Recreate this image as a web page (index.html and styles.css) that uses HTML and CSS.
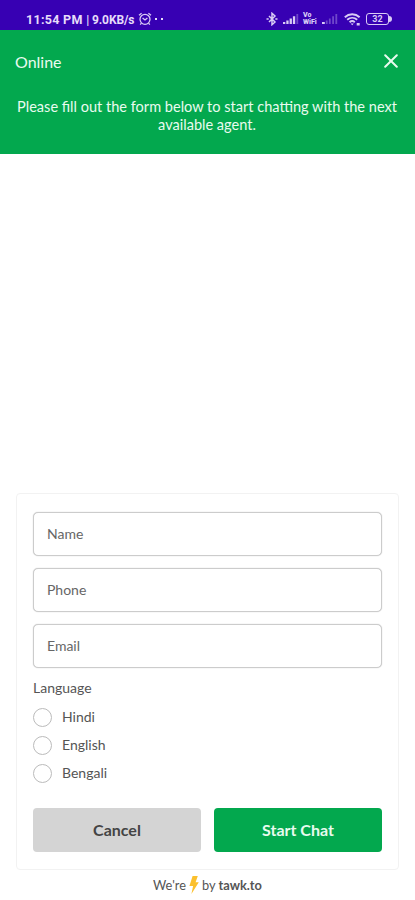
FILE: index.html
```html
<!DOCTYPE html>
<html lang="en">
<head>
  <meta charset="utf-8">
  <meta name="viewport" content="width=device-width, initial-scale=1">
  <title>Chat</title>
  <link rel="stylesheet" href="styles.css">
</head>
<body>
  <div class="status-bar">
    <div class="status-time">11:54 PM <span>| 9.0KB/s</span></div>
    <svg class="alarm" width="14" height="14" viewBox="0 0 14 14" fill="none" stroke="currentColor" stroke-width="1.3">
      <circle cx="7" cy="7.3" r="5"/>
      <path d="M4.6 6l2.4 2 2.4-2M1 3.3l2.6-2M13 3.3l-2.6-2M3.4 11.2l-1.2 1.5M10.6 11.2l1.2 1.5"/>
    </svg>
    <span class="dots"><i></i><i></i></span>

    <div class="status-icons">
      <svg width="12" height="14" viewBox="0 0 12 14" fill="none" stroke="currentColor" stroke-width="1.5">
        <path d="M3 4l6 6-3 2.7V1.3L9 4l-6 6"/>
        <path d="M.5 7h2.2M9.3 7h2.2"/>
      </svg>
      <svg class="signal" width="16" height="12" viewBox="0 0 16 12" fill="currentColor">
        <path d="M0 9h2.3v2H0zM3.3 7.5h2.3V11H3.3zM6.6 5.5h2.3V11H6.6zM9.9 3.2h2.3V11H9.9z"/>
        <path opacity=".35" d="M13.4 1h1.8v10h-1.8z"/>
      </svg>
      <span class="vowifi">Vo WiFi</span>
      <svg class="signal-two" width="16" height="12" viewBox="0 0 16 12" fill="currentColor">
        <path d="M0 9h2.8v2H0z"/>
        <path opacity=".35" d="M3.8 7.5h1.8V11H3.8zM6.9 5.5h1.8V11H6.9zM10.2 3.2H12V11h-1.8zM13.4 1h1.8v10h-1.8z"/>
      </svg>
      <svg class="wifi" width="17" height="13" viewBox="0 0 17 13" fill="none" stroke="currentColor" stroke-width="1.9">
        <path d="M.8 4.2c4.3-3.9 10.5-3.9 14.8 0M3.2 6.8c2.9-2.6 7.1-2.6 10 0M5.6 9.2c1.5-1.3 3.7-1.3 5.2 0"/>
        <path fill="currentColor" stroke="none" d="M6.6 10.4h3.2L8.2 12.2zM12.7 10h3v2.4h-3z"/>
      </svg>
      <div class="battery">32</div>
    </div>
  </div>

  <div class="header">
    <div class="header-top">
      <span>Online</span>
      <svg width="14" height="14" viewBox="0 0 14 14" fill="none" stroke="currentColor" stroke-width="2" stroke-linecap="round">
        <path d="M1.2 1.2l11.6 11.6M12.8 1.2L1.2 12.8"/>
      </svg>
    </div>
    <p>Please fill out the form below to start chatting with the next available agent.</p>
  </div>

  <form class="chat-form">
    <input type="text" name="name" placeholder="Name">
    <input type="text" name="phone" placeholder="Phone">
    <input type="text" name="email" placeholder="Email">

    <div class="group-label">Language</div>
    <label><input type="radio" name="language"><span>Hindi</span></label>
    <label><input type="radio" name="language"><span>English</span></label>
    <label><input type="radio" name="language"><span>Bengali</span></label>

    <div class="buttons">
      <button type="button" class="cancel">Cancel</button>
      <button type="submit" class="start">Start Chat</button>
    </div>
  </form>

  <div class="footer">
    <span>We're</span>
    <svg width="10" height="18" viewBox="0 0 10 18" fill="#fbc02d">
      <path d="M3.6 0h5.2L6.6 6.2h3.2L2.4 18l1.7-8H.4z"/>
    </svg>
    <span>by <b>tawk.to</b></span>
  </div>
</body>
</html>
```
FILE: styles.css
```css
* {
  box-sizing: border-box;
}

body {
  margin: 0;
  height: 900px;
  display: flex;
  flex-direction: column;
  overflow: hidden;
  background-color: #fff;
  color: #555;
  font-family: Lato, sans-serif;
  font-size: 14px;
}

.status-bar {
  display: flex;
  align-items: center;
  height: 30px;
  padding: 8px 23px 0 26px;
  background-color: #3700b3;
  color: #d9cbf5;
  font-family: Roboto, sans-serif;
}

.status-time {
  width: 111px;
  font-size: 12.5px;
  font-weight: bold;
  letter-spacing: 0.3px;
  white-space: nowrap;
  color: #e6dcfa;
}

.status-time span {
  font-size: 12px;
  letter-spacing: -0.1px;
}

.alarm {
  margin-left: 1px;
}

.dots {
  display: flex;
  gap: 4px;
  margin-left: 3px;
}

.dots i {
  width: 2px;
  height: 2px;
  background-color: #e6dcfa;
}

.status-icons {
  display: flex;
  align-items: center;
  margin-left: auto;
}

.signal {
  margin-left: 5px;
}

.vowifi {
  width: 17px;
  margin-left: 4px;
  font-size: 7px;
  font-weight: 900;
  line-height: 7px;
}

.signal-two {
  margin-left: 2px;
}

.wifi {
  margin-left: 6px;
}

.battery {
  position: relative;
  width: 23px;
  height: 12px;
  margin: 0 3px 0 5px;
  border: 1.5px solid #d9cbf5;
  border-radius: 3px;
  font-size: 9px;
  font-weight: bold;
  line-height: 10px;
  text-align: center;
}

.battery::after {
  content: "";
  position: absolute;
  top: 2px;
  right: -4px;
  width: 3px;
  height: 6px;
  border-radius: 0 3px 3px 0;
  background-color: #d9cbf5;
}

.header {
  height: 124px;
  padding: 21px 16px 0 15px;
  background-color: #03a84e;
  color: #e9fbef;
}

.header-top {
  display: flex;
  align-items: center;
  justify-content: space-between;
  height: 20px;
  font-size: 16px;
}

.header-top svg {
  margin-right: 1px;
}

.header p {
  margin: 27px -4px 0;
  font-size: 14.55px;
  line-height: 18px;
  text-align: center;
}

.chat-form {
  height: 377px;
  margin: auto 16px 0;
  padding: 18px 16px 0;
  border: 1px solid #f2f2f2;
  border-radius: 4px;
}

input[type="text"] {
  display: block;
  width: 100%;
  height: 44px;
  margin: 0 0 12px;
  padding: 0 13px 2px;
  border: 1px solid #ccc;
  border-radius: 5px;
  box-shadow: 0 0 1px #bbb;
  font-family: inherit;
  font-size: 14px;
}

input::placeholder {
  color: #666;
  opacity: 1;
}

.group-label {
  height: 23px;
  line-height: 16px;
}

label {
  display: flex;
  align-items: center;
  height: 28px;
}

label span {
  padding-bottom: 2px;
}

input[type="radio"] {
  appearance: none;
  width: 19px;
  height: 19px;
  margin: 0 10px 0 0;
  border: 1px solid #bbb;
  border-radius: 50%;
}

.buttons {
  display: flex;
  gap: 13px;
  margin-top: 21px;
}

button {
  flex: 1;
  height: 44px;
  padding: 0 0 2px;
  border: none;
  border-radius: 4px;
  font-family: inherit;
  font-size: 16px;
  font-weight: bold;
}

.cancel {
  background-color: #d4d4d4;
  color: #444;
}

.start {
  background-color: #03a84e;
  color: #e9fbef;
}

.footer {
  display: flex;
  align-items: center;
  justify-content: center;
  gap: 3px;
  height: 30px;
  font-size: 12.8px;
}
```
